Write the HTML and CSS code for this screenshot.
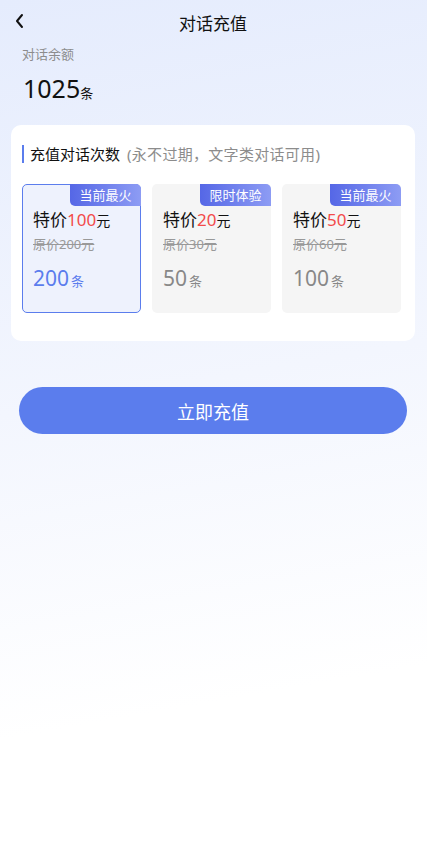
FILE: index.html
```html
<!DOCTYPE html>
<html lang="zh-CN">
<head>
    <meta charset="UTF-8">
    <meta name="viewport" content="width=device-width, initial-scale=1.0">
    <title>对话充值</title>
    <link rel="stylesheet" href="styles.css">
</head>
<body>
    <div class="page">
        <div class="nav">
            <span class="back">
                <svg width="12" height="16" viewBox="0 0 12 16"><path d="M8 2 L3 8 L8 14" fill="none" stroke="#111" stroke-width="2" stroke-linecap="round" stroke-linejoin="round"/></svg>
            </span>
            <h1>对话充值</h1>
        </div>

        <div class="balance">
            <div class="balance-label">对话余额</div>
            <div class="balance-value">1025<span>条</span></div>
        </div>

        <div class="panel">
            <div class="panel-title">充值对话次数<span>(永不过期，文字类对话可用)</span></div>
            <div class="plans">
                <div class="plan active">
                    <div class="badge">当前最火</div>
                    <div class="price">特价<em>100</em><small>元</small></div>
                    <div class="origin">原价200元</div>
                    <div class="count">200<span>条</span></div>
                </div>
                <div class="plan">
                    <div class="badge">限时体验</div>
                    <div class="price">特价<em>20</em><small>元</small></div>
                    <div class="origin">原价30元</div>
                    <div class="count">50<span>条</span></div>
                </div>
                <div class="plan">
                    <div class="badge">当前最火</div>
                    <div class="price">特价<em>50</em><small>元</small></div>
                    <div class="origin">原价60元</div>
                    <div class="count">100<span>条</span></div>
                </div>
            </div>
        </div>

        <button class="pay-btn">立即充值</button>
    </div>
</body>
</html>
```

FILE: styles.css
```css
* {
    box-sizing: border-box;
}

body {
    margin: 0;
    font-family: 'Noto Sans', 'Noto Sans CJK SC', sans-serif;
    color: #111;
    background: linear-gradient(170deg, #e5ecfd 0%, #f3f6fe 45%, #ffffff 80%);
    min-height: 850px;
}

.page {
    padding: 0 12px 40px 11px;
}

.nav {
    height: 44px;
    display: flex;
    align-items: center;
    justify-content: center;
    position: relative;
}

.back {
    position: absolute;
    left: 3px;
    top: 13px;
    display: flex;
}

.nav h1 {
    margin: 0;
    font-size: 17px;
    font-weight: normal;
}

.balance {
    padding: 0 11px;
}

.balance-label {
    font-size: 13px;
    color: #8c8c8c;
    line-height: 20px;
}

.balance-value {
    margin-top: 7px;
    font-size: 25px;
    line-height: 34px;
    padding-left: 1px;
}

.balance-value span {
    font-size: 13px;
}

.panel {
    margin-top: 15px;
    background: #fff;
    border-radius: 10px;
    padding: 20px 14px 28px 11px;
}

.panel-title {
    font-size: 15px;
    line-height: 18px;
    border-left: 2px solid #5b7ded;
    padding-left: 6px;
}

.panel-title span {
    color: #8c8c8c;
    margin-left: 7px;
    letter-spacing: 0.3px;
}

.plans {
    margin-top: 21px;
    display: grid;
    grid-template-columns: repeat(3, 1fr);
    gap: 11px;
}

.plan {
    position: relative;
    height: 129px;
    background: #f5f5f5;
    border-radius: 5px;
    border: 1px solid transparent;
    padding: 23px 10px 0;
}

.plan.active {
    background: #eef2fd;
    border-color: #5b7ded;
}

.badge {
    position: absolute;
    top: -1px;
    right: -1px;
    width: 71px;
    height: 22px;
    line-height: 22px;
    text-align: center;
    color: #fff;
    font-size: 13px;
    background: linear-gradient(90deg, #5567e6, #8d9cf4);
    border-radius: 0 5px 0 5px;
}

.price {
    font-size: 17px;
    line-height: 24px;
}

.price em {
    font-style: normal;
    color: #f34a4a;
}

.price small {
    font-size: 14px;
}

.origin {
    font-size: 13px;
    color: #999;
    text-decoration: line-through;
    line-height: 22px;
}

.count {
    margin-top: 8px;
    font-size: 21px;
    color: #888;
    line-height: 30px;
}

.count span {
    font-size: 13px;
    margin-left: 2px;
}

.plan.active .count {
    color: #5b7ded;
}

.pay-btn {
    display: block;
    margin: 46px 8px 0;
    width: calc(100% - 16px);
    height: 47px;
    border: none;
    border-radius: 24px;
    background: #5b7ded;
    color: #fff;
    font-size: 18px;
    font-family: inherit;
}
```
